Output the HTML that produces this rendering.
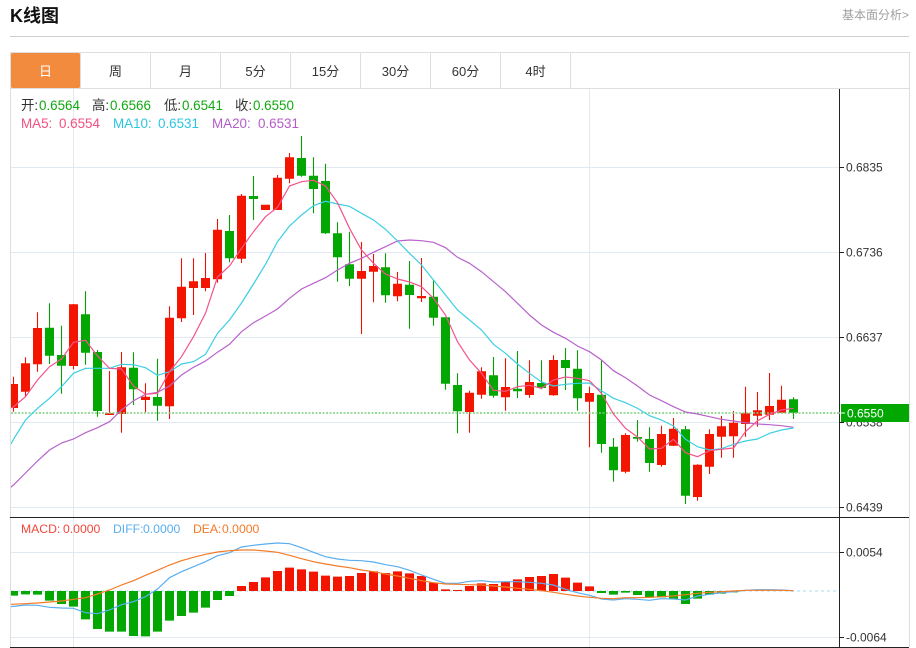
<!DOCTYPE html>
<html lang="zh"><head><meta charset="utf-8"><title>K线图</title>
<style>
html,body{margin:0;padding:0;background:#fff;width:916px;height:648px;overflow:hidden}
svg{display:block}
text{font-family:"Liberation Sans","Noto Sans CJK SC",sans-serif}
</style></head><body>
<svg width="916" height="648" viewBox="0 0 916 648" xmlns="http://www.w3.org/2000/svg">
<defs><clipPath id="c"><rect x="11" y="89" width="828" height="558"/></clipPath></defs>
<text x="10" y="22" font-size="18" font-weight="bold" fill="#111">K线图</text>
<text x="842" y="19" font-size="12" fill="#a0a0a0">基本面分析&gt;</text>
<path d="M10 36.5H909" stroke="#cfcfcf" fill="none"/>
<!-- tabs -->
<path d="M10.5 647V52.5H909.5V647M10 88.5H910M80.5 53V88M150.5 53V88M220.5 53V88M290.5 53V88M360.5 53V88M430.5 53V88M500.5 53V88M570.5 53V88" stroke="#dedede" fill="none"/>
<rect x="11" y="53" width="69" height="35" rx="1.5" fill="#f38b3e"/>
<g font-size="13" fill="#333" text-anchor="middle">
<text x="45.5" y="76" fill="#fff">日</text><text x="115.5" y="76">周</text><text x="185.5" y="76">月</text><text x="255.5" y="76">5分</text><text x="325.5" y="76">15分</text><text x="395.5" y="76">30分</text><text x="465.5" y="76">60分</text><text x="535.5" y="76">4时</text>
</g>
<!-- grid -->
<path d="M11 167.5H839M11 252.5H839M11 337.5H839M11 422.5H839M11 507.5H839M11 552.5H839M11 637.5H839M73.5 89V647M589.5 89V647" stroke="#e1eaf2" fill="none"/>
<g clip-path="url(#c)">
<!-- red wicks -->
<path fill="none" stroke="#ea1407" stroke-width="1.1" d="M13.5 376.7V411.7M25.5 357.3V396.7M37.5 312.3V371.7M73.5 304V369.3M109.5 371V415M121.5 352V432.7M145.5 383.3V412M169.5 306.3V419M181.5 258.3V322M193.5 258.3V315M205.5 253V291.3M217.5 219V282.7M241.5 194V263M277.5 175V210M289.5 153V183.3M361.5 242V334M373.5 254V302.3M397.5 272V301.3M421.5 258V302M469.5 390.7V432.7M481.5 367.3V398.7M505.5 358.3V410.7M529.5 360.3V397.7M553.5 355.3V395.7M589.5 386.7V447.3M625.5 433.3V473.3M661.5 425.7V466.7M673.5 418V446M697.5 464.3V500.7M709.5 429.3V474M721.5 416V457.7M733.5 411V457.7M745.5 386.7V436.7M757.5 392V426.7M769.5 373V420M781.5 385.7V413.3"/>
<!-- red bodies -->
<path fill="none" stroke="#f41500" stroke-width="9" d="M13.5 384V408M25.5 363.3V391.7M37.5 328V364.3M73.5 304.3V366M109.5 413.3V415M121.5 367.3V414M145.5 396.7V400M169.5 317.7V406.3M181.5 286.7V318.3M193.5 281.3V288M205.5 278V288M217.5 229.7V279.3M241.5 195.7V258.7M265.5 204.7V210M277.5 177.7V210M289.5 157.3V178.7M361.5 271V278.7M373.5 266V271.7M397.5 283.7V296.3M421.5 296V298.3M469.5 392.7V412M481.5 371.3V394.7M505.5 387V397.3M529.5 382V395M553.5 360V395.3M589.5 393V401.7M625.5 435V471.7M661.5 434V465M673.5 428.7V445.7M697.5 464.7V497M709.5 434V466.7M721.5 426.3V436.7M733.5 422.7V436.3M745.5 413.3V424M757.5 410.3V415.7M769.5 406V414.7M781.5 399.7V412.7"/>
<!-- green wicks -->
<path fill="none" stroke="#0a9a0a" stroke-width="1.1" d="M49.5 303.3V364M61.5 325.7V393.7M85.5 291.3V364.7M97.5 350V416.7M133.5 352.3V405M157.5 358.7V420.7M229.5 215V262.3M253.5 176V220M301.5 136V176.7M313.5 157.3V213.3M325.5 163.7V234M337.5 222.3V281.7M349.5 231.7V286M385.5 253.3V302.7M409.5 261V328.7M433.5 280V325.7M445.5 317.3V389.7M457.5 373.3V433.3M493.5 357V397.7M517.5 351V398M541.5 360.3V389.3M565.5 348V390M577.5 350.3V410.7M601.5 360.3V452.7M613.5 438V481.7M637.5 420V441.7M649.5 427.3V471.7M685.5 426V504M793.5 397.3V419"/>
<!-- green bodies -->
<path fill="none" stroke="#02a702" stroke-width="9" d="M49.5 327.7V355.7M61.5 355V365.7M85.5 314.3V352.7M97.5 352V411M133.5 367.7V389.3M157.5 397V405.7M229.5 231V258.3M253.5 196V199M301.5 158V175.7M313.5 175.7V189M325.5 181V233.3M337.5 233.3V257.3M349.5 264.3V278.7M385.5 267.3V295.3M409.5 284.7V295M433.5 296.7V317.7M445.5 317.3V383.7M457.5 385V411.3M493.5 375.3V395.7M517.5 388.7V391.3M541.5 383V388M565.5 360V368M577.5 368.7V398.3M601.5 394.7V444M613.5 446.7V470.3M637.5 437V438.7M649.5 439V463M685.5 429.3V495.7M793.5 399.3V412.7"/>
<!-- price line -->
<path d="M11 413H839" stroke="#7fcf7f" stroke-width="1.6" stroke-dasharray="2 1.5" fill="none"/>
<!-- MA20 -->
<polyline fill="none" stroke="#b962cc" stroke-width="1.2" points="10,488 13.5,485 25.5,473 37.5,461 49.5,450 61.5,443 73.5,439 85.5,432.7 97.5,427.7 109.5,421.7 121.5,410 133.5,400.7 145.5,394.3 157.5,392.3 169.5,386 181.5,375 193.5,367.3 205.5,361 217.5,352.2 229.5,344.3 241.5,331.7 253.5,322.7 265.5,316 277.5,309 289.5,298.3 301.5,289 313.5,283.3 325.5,277.7 337.5,270 349.5,263.3 361.5,258.3 373.5,252.3 385.5,246.7 397.5,241 409.5,240 421.5,240.7 433.5,242.3 445.5,247.7 457.5,257.3 469.5,263.3 481.5,271.7 493.5,281.7 505.5,291.7 517.5,303.3 529.5,315 541.5,325 553.5,332.3 565.5,338.3 577.5,346 589.5,351.7 601.5,360 613.5,370.7 625.5,377.7 637.5,386 649.5,395 661.5,400.7 673.5,406.7 685.5,412 697.5,414 709.5,416.7 721.5,419.3 733.5,421 745.5,422.7 757.5,424 769.5,424.7 781.5,425.7 793.5,427.3"/>
<!-- MA10 -->
<polyline fill="none" stroke="#3ccfe4" stroke-width="1.2" points="11,444 13.5,439.3 25.5,420 37.5,408.3 49.5,398.3 61.5,386.7 73.5,373.3 85.5,368.3 97.5,368.3 109.5,368.3 121.5,364.3 133.5,364.7 145.5,367.7 157.5,375.3 169.5,371.7 181.5,364 193.5,361.7 205.5,354.3 217.5,333.3 229.5,320 241.5,303 253.5,284 265.5,264.3 277.5,241.7 289.5,226 301.5,215 313.5,205.7 325.5,201.3 337.5,204 349.5,206.3 361.5,213.3 373.5,220 385.5,229.3 397.5,241 409.5,253.3 421.5,265 433.5,280 445.5,295 457.5,310 469.5,320 481.5,330 493.5,344.3 505.5,353.3 517.5,364 529.5,373.3 541.5,382 553.5,386 565.5,384.3 577.5,383.3 589.5,383 601.5,390.7 613.5,398.3 625.5,402.7 637.5,408.3 649.5,415.7 661.5,420 673.5,426 685.5,439.3 697.5,446.7 709.5,450 721.5,448.7 733.5,444.3 745.5,441 757.5,439 769.5,433.3 781.5,430 793.5,428"/>
<!-- MA5 -->
<polyline fill="none" stroke="#f4548b" stroke-width="1.2" points="11,408 13.5,406.7 25.5,396.7 37.5,380 49.5,366.7 61.5,359 73.5,342.3 85.5,340.3 97.5,356 109.5,368.3 121.5,369 133.5,386 145.5,394.3 157.5,393.3 169.5,371.7 181.5,356.7 193.5,336.7 205.5,313.3 217.5,277 229.5,266 241.5,248.3 253.5,231.7 265.5,216.7 277.5,207.3 289.5,186 301.5,181.7 313.5,180.3 325.5,186 337.5,202.7 349.5,228.3 361.5,250 373.5,263.3 385.5,274 397.5,279 409.5,282 421.5,286.7 433.5,298.3 445.5,315 457.5,341.7 469.5,360 481.5,373.3 493.5,390.3 505.5,391.3 517.5,386.7 529.5,385.3 541.5,388.3 553.5,380 565.5,377 577.5,378.3 589.5,380.7 601.5,393.3 613.5,414 625.5,428.3 637.5,437 649.5,449 661.5,448.3 673.5,439.3 685.5,452.7 697.5,456.7 709.5,450.7 721.5,449.3 733.5,448 745.5,431.7 757.5,420.7 769.5,414.3 781.5,410 793.5,408.3"/>
<!-- MACD, y in 3x units -->
<g transform="translate(0 510) scale(1 .33333)">
<path vector-effect="non-scaling-stroke" d="M11 243H839" stroke="#c5e6f2" stroke-width="1.6" stroke-dasharray="3 3" fill="none"/>
<path vector-effect="non-scaling-stroke" fill="none" stroke="#02a702" stroke-width="9" d="M13.5 243V257M25.5 243V253M37.5 243V254M49.5 243V272M61.5 243V282M73.5 243V290M85.5 243V328M97.5 243V357M109.5 243V365M121.5 243V365M133.5 243V378M145.5 243V379M157.5 243V365M169.5 243V332M181.5 243V318M193.5 243V308M205.5 243V293M217.5 243V270M229.5 243V258M601.5 243V249M613.5 243V254M625.5 243V248M637.5 243V255M649.5 243V263M661.5 243V262M673.5 243V267M685.5 243V282M697.5 243V266M709.5 243V254M721.5 243V251M733.5 243V247"/>
<path vector-effect="non-scaling-stroke" fill="none" stroke="#f41500" stroke-width="9" d="M241.5 243V228M253.5 243V216M265.5 243V202M277.5 243V183M289.5 243V173M301.5 243V178M313.5 243V185M325.5 243V197M337.5 243V200M349.5 243V198M361.5 243V189M373.5 243V184M385.5 243V189M397.5 243V184M409.5 243V190M421.5 243V198M433.5 243V218M445.5 243V238M457.5 243V240M469.5 243V228M481.5 243V220M493.5 243V222M505.5 243V215M517.5 243V208M529.5 243V201M541.5 243V198M553.5 243V192M565.5 243V203M577.5 243V218M589.5 243V229"/>
<polyline vector-effect="non-scaling-stroke" fill="none" stroke="#5aaef0" stroke-width="1.2" points="11,290 25.5,285 37.5,286 49.5,292 61.5,294 73.5,295 85.5,308 97.5,311 109.5,300 121.5,284 133.5,275 145.5,260 157.5,237 169.5,203 181.5,185 193.5,170 205.5,155 217.5,137 229.5,128 241.5,111 253.5,106 265.5,102 277.5,99 289.5,101 301.5,113 313.5,127 325.5,140 337.5,147 349.5,151 361.5,152 373.5,156 385.5,164 397.5,170 409.5,181 421.5,195 433.5,208 445.5,220 457.5,220 469.5,214 481.5,212 493.5,216 505.5,215 517.5,215 529.5,217 541.5,220 553.5,225 565.5,238 577.5,248 589.5,256 601.5,267 613.5,270 625.5,266 637.5,268 649.5,271 661.5,266 673.5,267 685.5,270 697.5,258 709.5,253 721.5,248 733.5,245 745.5,241 757.5,239 769.5,239 781.5,240 793.5,242"/>
<polyline vector-effect="non-scaling-stroke" fill="none" stroke="#f47a26" stroke-width="1.2" points="11,283 25.5,281 37.5,279 49.5,276 61.5,273 73.5,268 85.5,263 97.5,252 109.5,240 121.5,225 133.5,212 145.5,196 157.5,181 169.5,165 181.5,152 193.5,142 205.5,133 217.5,126 229.5,122 241.5,120 253.5,120 265.5,123 277.5,127 289.5,136 301.5,146 313.5,155 325.5,162 337.5,168 349.5,173 361.5,180 373.5,185 385.5,192 397.5,198 409.5,205 421.5,212 433.5,218 445.5,222 457.5,223 469.5,224 481.5,225 493.5,228 505.5,231 517.5,235 529.5,238 541.5,242 553.5,247 565.5,253 577.5,258 589.5,262 601.5,265 613.5,266 625.5,263 637.5,263 649.5,262 661.5,260 673.5,258 685.5,254 697.5,250 709.5,247 721.5,245 733.5,243 745.5,241 757.5,241 769.5,241 781.5,241 793.5,242"/>
</g>
</g>
<!-- axis -->
<path d="M839.5 89V647M10 517.5H909M10 647.5H909M839 167.5H844M839 252.5H844M839 337.5H844M839 422.5H844M839 507.5H844M839 552.5H844M839 637.5H844" stroke="#222" fill="none"/>
<g font-size="12" fill="#333">
<text x="846" y="171.5">0.6835</text><text x="846" y="256.5">0.6736</text><text x="846" y="341.5">0.6637</text><text x="846" y="426.5">0.6538</text><text x="846" y="511.5">0.6439</text><text x="846" y="556.5">0.0054</text><text x="846" y="641.5">-0.0064</text>
</g>
<rect x="841" y="404" width="68" height="18" fill="#02a702"/>
<path d="M839 413H845" stroke="#fff"/>
<text x="847" y="417.5" font-size="12" fill="#fff">0.6550</text>
<!-- legends -->
<g font-size="13.4">
<g fill="#333"><text x="21" y="110">开:</text><text x="92" y="110">高:</text><text x="164" y="110">低:</text><text x="235" y="110">收:</text></g>
<g fill="#12a812"><text x="39" y="110">0.6564</text><text x="110" y="110">0.6566</text><text x="182" y="110">0.6541</text><text x="253" y="110">0.6550</text></g>
<g fill="#f2507f"><text x="21" y="128">MA5:</text><text x="59" y="128">0.6554</text></g>
<g fill="#2cc5e0"><text x="113" y="128">MA10:</text><text x="158" y="128">0.6531</text></g>
<g fill="#b55bc8"><text x="212" y="128">MA20:</text><text x="258" y="128">0.6531</text></g>
</g>
<g font-size="12.2">
<g fill="#f3463a"><text x="21" y="533">MACD:</text><text x="63" y="533">0.0000</text></g>
<g fill="#5aaef0"><text x="113" y="533">DIFF:</text><text x="143" y="533">0.0000</text></g>
<g fill="#f47a26"><text x="193" y="533">DEA:</text><text x="222" y="533">0.0000</text></g>
</g>
</svg>
</body></html>
